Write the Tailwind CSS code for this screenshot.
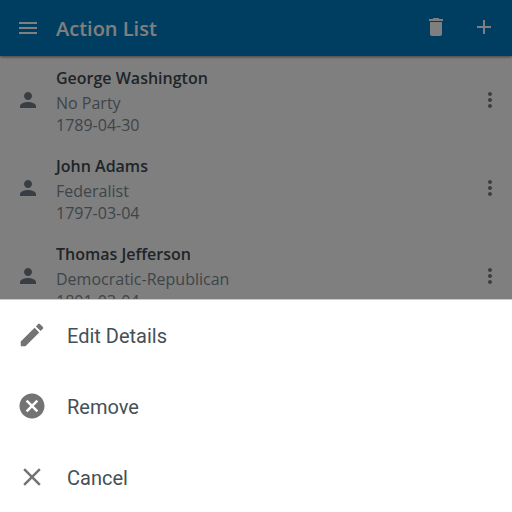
<!DOCTYPE html>
<html lang="en">
<head>
<meta charset="utf-8">
<meta name="viewport" content="width=device-width, initial-scale=1">
<title>Action List</title>
<script src="https://cdn.jsdelivr.net/npm/@tailwindcss/browser@4"></script>
</head>
<body class="relative h-screen overflow-hidden bg-white font-['Open_Sans','Noto_Sans',sans-serif]">
<svg class="hidden" aria-hidden="true">
  <symbol id="person" viewBox="0 0 24 24"><path d="M12 12c2.21 0 4-1.79 4-4s-1.79-4-4-4-4 1.79-4 4 1.79 4 4 4zm0 2c-2.67 0-8 1.34-8 4v2h16v-2c0-2.66-5.33-4-8-4z"/></symbol>
  <symbol id="more" viewBox="0 0 24 24"><path d="M12 8c1.1 0 2-.9 2-2s-.9-2-2-2-2 .9-2 2 .9 2 2 2zm0 2c-1.1 0-2 .9-2 2s.9 2 2 2 2-.9 2-2-.9-2-2-2zm0 6c-1.1 0-2 .9-2 2s.9 2 2 2 2-.9 2-2-.9-2-2-2z"/></symbol>
</svg>

<header class="relative flex h-14 items-center bg-[#007cc2] px-4 text-white shadow-[0_1px_3px_rgba(0,0,0,0.5)]">
  <button type="button" aria-label="Menu"><svg class="size-6 fill-current" viewBox="0 0 24 24"><path d="M3 18h18v-2H3v2zm0-5h18v-2H3v2zm0-7v2h18V6H3z"/></svg></button>
  <h1 class="ml-4 flex-1 pt-0.5 text-xl leading-7 font-semibold">Action List</h1>
  <div class="flex gap-6 pb-0.5">
    <button type="button" aria-label="Delete"><svg class="size-6 fill-current" viewBox="0 0 24 24"><path d="M6 19c0 1.100.9 2 2 2h8c1.100 0 2-.9 2-2V7H6v12zM19 4h-3.500l-1-1h-5l-1 1H5v2h14V4z"/></svg></button>
    <button type="button" aria-label="Add"><svg class="size-6 fill-current" viewBox="0 0 24 24"><path d="M19 13h-6v6h-2v-6H5v-2h6V5h2v6h6v2z"/></svg></button>
  </div>
</header>

<ul class="text-base leading-[22px] text-[#7d8a92]">
  <li class="flex h-22 items-center pr-2.5 pl-4">
    <svg class="size-6 fill-[#707d86]" aria-hidden="true"><use href="#person"/></svg>
    <div class="ml-4 flex-1 pt-0.5"><h2 class="mb-[3px] font-semibold text-[#3f4a52]">George Washington</h2><p>No Party</p><p>1789-04-30</p></div>
    <button type="button" aria-label="More actions for George Washington"><svg class="size-6 fill-[#707d86]"><use href="#more"/></svg></button>
  </li>
  <li class="flex h-22 items-center pr-2.5 pl-4">
    <svg class="size-6 fill-[#707d86]" aria-hidden="true"><use href="#person"/></svg>
    <div class="ml-4 flex-1 pt-0.5"><h2 class="mb-[3px] font-semibold text-[#3f4a52]">John Adams</h2><p>Federalist</p><p>1797-03-04</p></div>
    <button type="button" aria-label="More actions for John Adams"><svg class="size-6 fill-[#707d86]"><use href="#more"/></svg></button>
  </li>
  <li class="flex h-22 items-center pr-2.5 pl-4">
    <svg class="size-6 fill-[#707d86]" aria-hidden="true"><use href="#person"/></svg>
    <div class="ml-4 flex-1 pt-0.5"><h2 class="mb-[3px] font-semibold text-[#3f4a52]">Thomas Jefferson</h2><p>Democratic-Republican</p><p>1801-03-04</p></div>
    <button type="button" aria-label="More actions for Thomas Jefferson"><svg class="size-6 fill-[#707d86]"><use href="#more"/></svg></button>
  </li>
</ul>

<div class="absolute inset-0 flex flex-col justify-end bg-black/50">
  <div role="dialog" aria-label="Actions" class="flex flex-col gap-px border-t border-[#c9c9c9] bg-white font-[Roboto,sans-serif] text-xl text-[#455056]">
    <button type="button" class="flex h-[70px] w-full items-center gap-5 px-[17px] text-left"><svg class="size-[30px] fill-[#737373]" viewBox="0 0 24 24" aria-hidden="true"><path d="M3 17.250V21h3.750L17.810 9.940l-3.750-3.750L3 17.250zM20.710 7.040c.39-.39.39-1.020 0-1.410l-2.340-2.340c-.39-.39-1.020-.39-1.410 0l-1.830 1.830 3.750 3.750 1.830-1.830z"/></svg><span class="pt-0.5">Edit Details</span></button>
    <button type="button" class="flex h-[70px] w-full items-center gap-5 px-[17px] text-left"><svg class="size-[30px] fill-[#737373]" viewBox="0 0 24 24" aria-hidden="true"><path d="M12 2C6.470 2 2 6.470 2 12s4.470 10 10 10 10-4.470 10-10S17.530 2 12 2zm5 13.590L15.590 17 12 13.410 8.410 17 7 15.590 10.590 12 7 8.410 8.410 7 12 10.590 15.590 7 17 8.410 13.410 12 17 15.590z"/></svg><span class="pt-0.5">Remove</span></button>
    <button type="button" class="flex h-[70px] w-full items-center gap-5 px-[17px] text-left"><svg class="size-[30px] fill-[#737373]" viewBox="0 0 24 24" aria-hidden="true"><path d="M19 6.410L17.590 5 12 10.590 6.410 5 5 6.410 10.590 12 5 17.590 6.410 19 12 13.410 17.590 19 19 17.590 13.410 12z"/></svg><span class="pt-0.5">Cancel</span></button>
  </div>
</div>
</body>
</html>
